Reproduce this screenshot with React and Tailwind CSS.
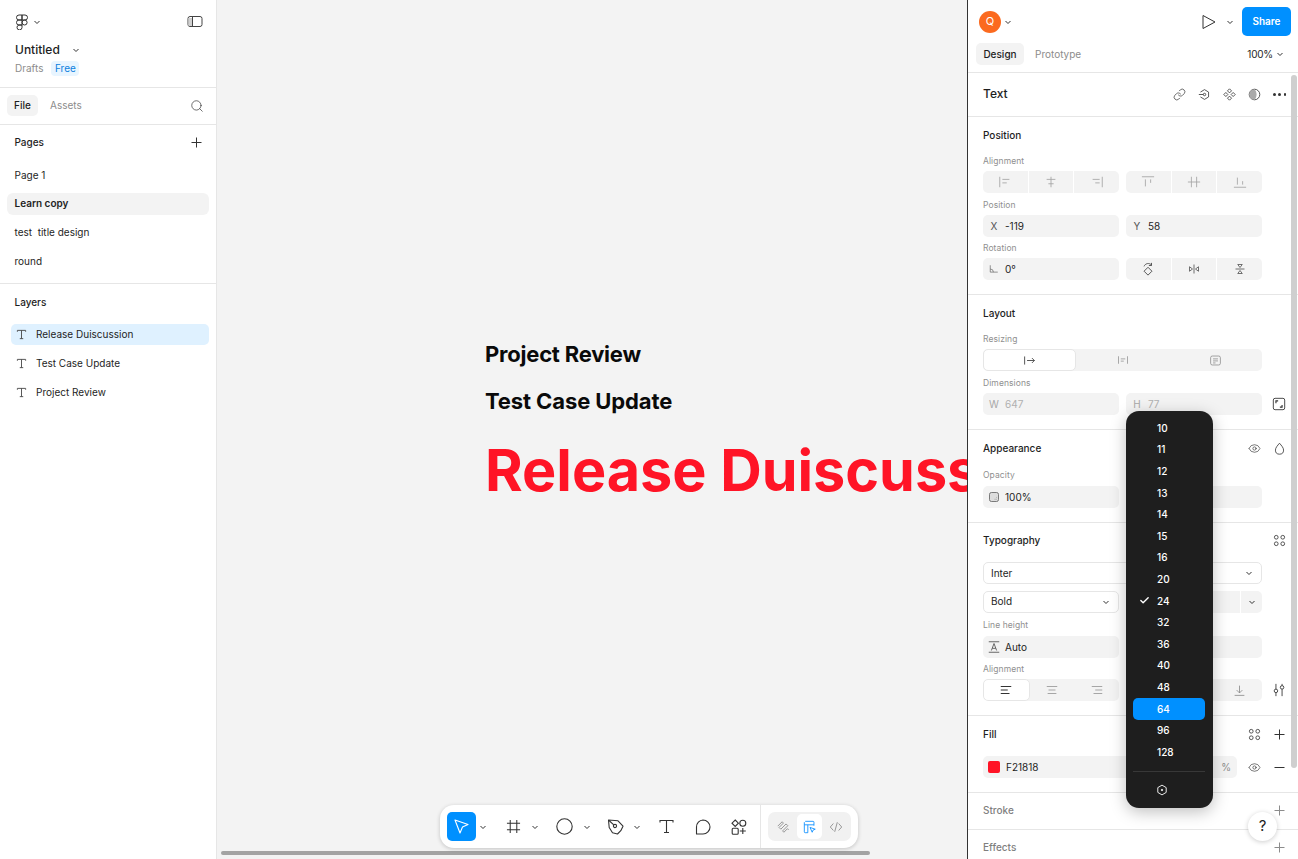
import React from 'react';
import { Check, Eye, Link, Search } from 'lucide-react';

const FONT = 'font-["Inter","Noto_Sans",sans-serif]';

const Svg = ({ size = 16, className = '', children }) => (
  <svg width={size} height={size} viewBox="0 0 16 16" fill="none" stroke="currentColor" strokeWidth="1" className={`shrink-0 ${className}`}>
    {children}
  </svg>
);

const Chevron = ({ className = 'text-[#333]' }) => (
  <svg width="8" height="8" viewBox="0 0 8 8" fill="none" stroke="currentColor" strokeWidth="1" className={`shrink-0 ${className}`}>
    <path d="M1.5 3 4 5.5 6.5 3" />
  </svg>
);

const PlusIcon = ({ className = 'text-[#333]' }) => (
  <svg width="13" height="13" viewBox="0 0 13 13" fill="none" stroke="currentColor" strokeWidth="1" className={`shrink-0 ${className}`}>
    <path d="M6.5 1.500v10M1.500 6.500h10" />
  </svg>
);

const MinusIcon = () => (
  <svg width="13" height="13" viewBox="0 0 13 13" fill="none" stroke="#333" strokeWidth="1" className="shrink-0">
    <path d="M1.500 6.500h10" />
  </svg>
);

const TIcon = () => (
  <Svg size={11} className="text-[#444]">
    <path d="M2 4V2h12v2M8 2v12M5.5 14h5" strokeWidth="1.3" />
  </Svg>
);

const FourDots = () => (
  <Svg size={13} className="text-[#333]">
    <circle cx="4" cy="4" r="2.3" /><circle cx="12" cy="4" r="2.3" /><circle cx="4" cy="12" r="2.3" /><circle cx="12" cy="12" r="2.3" />
  </Svg>
);

const Label = ({ h, children }) => (
  <div className={`flex items-center pl-[15px] text-[8.5px] tracking-[0.01em] text-[#8f8f8f] ${h}`}>{children}</div>
);

const Title = ({ h, children, right, muted }) => (
  <div className={`flex items-center justify-between pl-[15px] pr-[12px] text-[10px] font-medium ${muted ? 'text-[#7f7f7f]' : 'text-[#1e1e1e]'} ${h}`}>
    <span>{children}</span>
    {right && <div className="flex items-center gap-[12px]">{right}</div>}
  </div>
);

const Row = ({ children, trailing }) => (
  <div className="relative flex gap-[7px] pl-[15px]">
    {children}
    {trailing && <div className="absolute left-[304px] top-[4px]">{trailing}</div>}
  </div>
);

const Field = ({ prefix, value, muted }) => (
  <div className="flex h-[22px] w-[136px] items-center rounded-[5px] bg-[#f3f3f3] text-[10px]">
    <span className={`flex w-[22px] items-center justify-center ${muted ? 'text-[#a8a8a8]' : 'text-[#555]'}`}>{prefix}</span>
    <span className={muted ? 'text-[#b0b0b0]' : 'text-[#1e1e1e]'}>{value}</span>
  </div>
);

const Seg = ({ items, selected }) => (
  <div className="flex h-[22px] w-[136px] overflow-hidden rounded-[5px] bg-[#f3f3f3]">
    {items.map((item, i) => (
      <div
        key={i}
        className={`flex flex-1 items-center justify-center ${i > 0 && selected === undefined ? 'border-l border-white' : ''} ${selected === i ? 'rounded-[5px] border border-[#e6e6e6] bg-white text-[#333]' : 'text-[#a6a6a6]'}`}
      >
        {item}
      </div>
    ))}
  </div>
);

const Select = ({ label, className }) => (
  <div className={`flex h-[22px] items-center justify-between rounded-[5px] border border-[#e6e6e6] bg-white pl-[7px] pr-[8px] text-[10px] text-[#1e1e1e] ${className}`}>
    <span>{label}</span>
    <Chevron />
  </div>
);

const alignLeft = <Svg size={14}><path d="M2 2v12M5 5h8M5 9h5" /></Svg>;
const alignCenter = <Svg size={14}><path d="M8 2v12M3 5h10M5 10h6" /></Svg>;
const alignRight = <Svg size={14}><path d="M14 2v12M3 5h8M6 9h5" /></Svg>;
const alignTop = <Svg size={14}><path d="M1 2h14M5 5v8M11 5v4" /></Svg>;
const alignMiddle = <Svg size={14}><path d="M5 2v12M11 2v12M1 8h14" /></Svg>;
const alignBottom = <Svg size={14}><path d="M1 14h14M5 3v8M11 7v4" /></Svg>;

const textLeft = <Svg size={14}><path d="M2 4h12M2 8h8M2 12h10" strokeWidth="1.2" /></Svg>;
const textCenter = <Svg size={14}><path d="M2 4h12M4 8h8M3 12h10" strokeWidth="1.2" /></Svg>;
const textRight = <Svg size={14}><path d="M2 4h12M6 8h8M4 12h10" strokeWidth="1.2" /></Svg>;

const sizes = ['10', '11', '12', '13', '14', '15', '16', '20', '24', '32', '36', '40', '48', '64', '96', '128'];

const SizeMenu = () => (
  <div className="absolute left-[158px] top-[411px] z-20 h-[397px] w-[87px] rounded-[13px] bg-[#1e1e1e] pl-[7px] pr-[8px] pt-[6.500px] text-[10px] font-medium text-white shadow-[0_4px_16px_rgba(0,0,0,0.25)]">
    {sizes.map((s) => (
      <div key={s} className={`relative flex h-[21.6px] items-center rounded-[5px] pl-[24px] ${s === '64' ? 'bg-[#0090ff]' : ''}`}>
        {s === '24' && <Check size={11} strokeWidth={3} className="absolute left-[6px] top-[5px]" />}
        {s}
      </div>
    ))}
    <div className="mt-[8px] border-t border-[#383838]" />
    <div className="flex h-[36px] items-center pl-[23px]">
      <Svg size={12}>
        <path d="M8 1.5 13.6 4.8v6.4L8 14.5l-5.6-3.3V4.8z" strokeWidth="1.2" />
        <circle cx="8" cy="8" r="1" fill="currentColor" />
      </Svg>
    </div>
  </div>
);

const LeftPanel = () => (
  <aside className="flex h-full w-[217px] shrink-0 flex-col border-r border-[#e6e6e6] bg-white text-[10px] text-[#1e1e1e]">
    <div className="h-[88px] shrink-0 border-b border-[#e6e6e6]">
      <div className="flex h-[42px] items-center justify-between pl-[15px] pr-[13px] pt-[1px]">
        <div className="flex items-center gap-[4px]">
          <svg width="14" height="16" viewBox="0 0 14 16" fill="none" stroke="#333" strokeWidth="1">
            <path d="M7 1H4a2.5 2.5 0 0 0 0 5h3zM7 1h3a2.5 2.5 0 0 1 0 5H7zM7 6H4a2.5 2.5 0 0 0 0 5h3zM7 11H4a2.5 2.5 0 1 0 3 2.5z" />
            <circle cx="9.6" cy="8.5" r="2.5" />
          </svg>
          <Chevron />
        </div>
        <svg width="16" height="13" viewBox="0 0 16 13" fill="none" stroke="#444" strokeWidth="1">
          <rect x="1" y="1.5" width="14" height="10" rx="2" />
          <path d="M5.5 1.5v10" />
          <path d="M1.5 3h3.5v8h-3.5z" fill="#d0d0d0" stroke="none" />
        </svg>
      </div>
      <div className="flex h-[16px] items-center gap-[12px] pl-[15px] text-[12px] font-medium">
        Untitled
        <Chevron />
      </div>
      <div className="mt-[3px] flex h-[15px] items-center gap-[8px] pl-[15px] text-[#8c8c8c]">
        Drafts
        <span className="flex h-[15px] w-[28px] items-center justify-center rounded-[4px] bg-[#e8f5ff] text-[#0b7fe0]">Free</span>
      </div>
    </div>

    <div className="flex h-[37px] shrink-0 items-center justify-between border-b border-[#e6e6e6] pl-[7px] pr-[12px] pb-[1px]">
      <div className="flex items-center gap-[12px]">
        <span className="flex h-[21px] w-[31px] items-center justify-center rounded-[5px] bg-[#f3f3f3] font-medium">File</span>
        <span className="text-[#8c8c8c]">Assets</span>
      </div>
      <Search size={14} strokeWidth={1.2} className="text-[#333]" />
    </div>

    <div className="h-[159px] shrink-0 border-b border-[#e6e6e6]">
      <div className="flex h-[35px] items-center justify-between pl-[14.5px] pr-[13px] font-medium">
        Pages
        <PlusIcon />
      </div>
      <div className="flex flex-col gap-[7px] pt-[4px]">
        <div className="mx-[7px] flex h-[22px] items-center px-[7.5px]">Page 1</div>
        <div className="mx-[7px] flex h-[22px] items-center rounded-[6px] bg-[#f3f3f3] px-[7.5px] pb-[1px] font-semibold">Learn copy</div>
        <div className="mx-[7px] -mt-[1px] flex h-[22px] items-center whitespace-pre px-[7.5px]">test  title design</div>
        <div className="mx-[7px] flex h-[22px] items-center px-[7.5px]">round</div>
      </div>
    </div>

    <div className="flex h-[37px] shrink-0 items-center pl-[14.5px] font-medium">Layers</div>
    <div className="flex flex-col gap-[7px] pt-[3px]">
      <div className="ml-[11px] mr-[7px] flex h-[21px] items-center gap-[9px] rounded-[5px] bg-[#dff1ff] pl-[5px]"><TIcon />Release Duiscussion</div>
      <div className="ml-[11px] mr-[7px] flex h-[22px] items-center gap-[9px] pl-[5px]"><TIcon />Test Case Update</div>
      <div className="ml-[11px] mr-[7px] flex h-[22px] items-center gap-[9px] pl-[5px]"><TIcon />Project Review</div>
    </div>
  </aside>
);

const Toolbar = () => (
  <div className="absolute bottom-[11px] left-[223px] z-10 flex h-[43px] w-[418px] items-center rounded-[14px] bg-white pl-[7px] text-[#333] shadow-[0_1px_4px_rgba(0,0,0,0.2)]">
    <div className="flex h-[29px] w-[29px] items-center justify-center rounded-[5px] bg-[#0090ff] text-white">
      <svg width="17" height="17" viewBox="0 0 17 17" fill="none" stroke="currentColor" strokeWidth="1.1"><path d="M2 2l13 4.5-5.500 2.500-2.500 6z" strokeLinejoin="round" /></svg>
    </div>
    <div className="ml-[3px] w-[8px]"><Chevron /></div>
    <div className="ml-[19px] flex w-[32px] items-center gap-[10px]">
      <Svg size={15}><path d="M4.5 1v14M11.5 1v14M1 4.5h14M1 11.5h14" strokeWidth="1.1" /></Svg>
      <Chevron />
    </div>
    <div className="ml-[18px] flex w-[32px] items-center gap-[10px]">
      <svg width="17" height="17" viewBox="0 0 17 17" fill="none" stroke="currentColor" strokeWidth="1.1" className="shrink-0"><circle cx="8.5" cy="8.5" r="7.7" /></svg>
      <Chevron />
    </div>
    <div className="ml-[19px] flex items-center gap-[8px]">
      <svg width="18" height="18" viewBox="0 0 18 18" fill="none" stroke="currentColor" strokeWidth="1.1" className="shrink-0">
        <path d="M1.500 2 11 2.800l5 5.400-2.200 4.500-3.300 3.300-5-1.300L2.200 9.500z" strokeLinejoin="round" />
        <circle cx="8" cy="8" r="1.600" />
        <path d="M2 2.500 6.800 6.800" />
      </svg>
      <Chevron />
    </div>
    <div className="ml-[18px]">
      <svg width="15" height="15" viewBox="0 0 15 15" fill="none" stroke="currentColor" strokeWidth="1.1"><path d="M1 3.500V1.500h13v2M7.500 1.500v12M5 13.500h5" /></svg>
    </div>
    <div className="ml-[21px]">
      <svg width="16" height="16" viewBox="0 0 16 16" fill="none" stroke="currentColor" strokeWidth="1.1"><path d="M8 1a7 7 0 0 1 0 14H1.500V8A7 7 0 0 1 8 1z" strokeLinejoin="round" /></svg>
    </div>
    <div className="ml-[20px]">
      <svg width="16" height="16" viewBox="0 0 16 16" fill="none" stroke="currentColor" strokeWidth="1.1">
        <path d="M4.200 1 7.400 4.200 4.200 7.400 1 4.200z" /><circle cx="11.800" cy="4.200" r="3" /><rect x="1.200" y="9.200" width="6" height="6" rx="1" /><path d="M11.800 9v6M8.800 12h6" />
      </svg>
    </div>
    <div className="ml-[13px] flex h-full items-center border-l border-[#e6e6e6] pl-[7px]">
      <div className="flex h-[29px] w-[83px] items-center justify-between rounded-[7px] bg-[#f1f1f1] px-[2px]">
        <div className="flex w-[26px] justify-center text-[#8a8a8a]">
          <Svg size={14}><path d="M2 7 7 2l1.500 1.500-5 5 2 2 6-6 2 2-6 6 1.500 1.500 4-4 1.500 1" /></Svg>
        </div>
        <div className="flex h-[25px] w-[25px] items-center justify-center rounded-[5px] bg-white text-[#0d8fff]">
          <Svg size={14}><path d="M1.500 5.500h11M5.500 5.500v9M2.500 1.500h9a1 1 0 0 1 1 1v4M1.500 2.500v11a1 1 0 0 0 1 1h3" /><path d="M8 8.500l6 2-2.500 1-1 2.500z" /></Svg>
        </div>
        <div className="flex w-[26px] justify-center text-[#8a8a8a]">
          <Svg size={14}><path d="M5 4 1.500 8 5 12M11 4l3.500 4-3.500 4M9.500 2.500l-3 11" /></Svg>
        </div>
      </div>
    </div>
  </div>
);

const Canvas = () => (
  <main className="relative h-full min-w-0 flex-1 overflow-hidden bg-[#f3f3f3]">
    <div className="flex w-[900px] flex-col pl-[268px] pt-[340px] font-bold text-[#0a0a0a]">
      <div className="h-[29px] text-[22px] leading-[29px] tracking-[-0.01em]">Project Review</div>
      <div className="mt-[18px] h-[29px] text-[22px] leading-[29px] tracking-[-0.005em]">Test Case Update</div>
      <div className="mt-[16px] h-[77px] whitespace-nowrap text-[57.5px] leading-[77px] text-[#ff1426]">Release Duiscussion</div>
    </div>
    <Toolbar />
    <div className="absolute bottom-[4px] left-[4px] h-[4px] w-[649px] rounded-full bg-[#a3a3a3]" />
  </main>
);

const RightPanel = () => (
  <aside className="relative z-10 h-full w-[331px] shrink-0 overflow-hidden border-l border-[#333] bg-white text-[10px] text-[#1e1e1e]">
    <div className="h-[73px] border-b border-[#e6e6e6]">
      <div className="flex h-[43px] items-center justify-between pl-[11px] pr-[7px]">
        <div className="flex items-center gap-[3px]">
          <span className="flex h-[22px] w-[22px] items-center justify-center rounded-full bg-[#fb6a1f] text-[11px] text-white">Q</span>
          <Chevron />
        </div>
        <div className="flex items-center">
          <svg width="14" height="16" viewBox="0 0 14 16" fill="none" stroke="#333" strokeWidth="1" className="mr-[10px]"><path d="M1 1.500 13 8 1 14.500z" strokeLinejoin="round" /></svg>
          <Chevron />
          <span className="ml-[8px] flex h-[29px] w-[49px] items-center justify-center rounded-[5px] bg-[#0090ff] font-semibold text-white">Share</span>
        </div>
      </div>
      <div className="flex h-[22px] items-center justify-between pl-[8px] pr-[14px]">
        <div className="flex items-center gap-[11px]">
          <span className="flex h-[22px] w-[48px] items-center justify-center rounded-[5px] bg-[#f3f3f3] font-medium">Design</span>
          <span className="text-[#8c8c8c]">Prototype</span>
        </div>
        <div className="flex items-center gap-[3px]"><span className="tracking-[-0.02em]">100%</span><Chevron /></div>
      </div>
    </div>

    <div className="flex h-[44px] items-center justify-between border-b border-[#e6e6e6] pl-[15px] pr-[12px]">
      <span className="pb-[1px] text-[12px] font-medium">Text</span>
      <div className="flex items-center gap-[12px] text-[#333]">
        <Link size={13} strokeWidth={1.3} />
        <Svg size={13}><path d="M3 5 8 2l5 3v6l-5 3-5-3" /><path d="M1 8h5.500" /><circle cx="8" cy="8" r="1.500" /></Svg>
        <Svg size={13}><path d="M8 1 10.500 3.500 8 6 5.500 3.500zM8 10l2.500 2.500L8 15l-2.500-2.500zM3.500 5.500 6 8l-2.500 2.500L1 8zM12.500 5.500 15 8l-2.500 2.500L10 8z" /></Svg>
        <Svg size={13}><circle cx="8" cy="8" r="6.500" /><path d="M8 1.500a6.500 6.500 0 0 0 0 13c1.500-1.500 2.500-4 2.500-6.500S9.500 3 8 1.500z" fill="#aaa" stroke="none" /></Svg>
        <div className="flex w-[13px] justify-between">
          <span className="h-[2.5px] w-[2.5px] rounded-full bg-[#333]" />
          <span className="h-[2.5px] w-[2.5px] rounded-full bg-[#333]" />
          <span className="h-[2.5px] w-[2.5px] rounded-full bg-[#333]" />
        </div>
      </div>
    </div>

    <section className="h-[178px] border-b border-[#e6e6e6]">
      <Title h="h-[36px]">Position</Title>
      <Label h="h-[18px] pb-[2px]">Alignment</Label>
      <Row>
        <Seg items={[alignLeft, alignCenter, alignRight]} />
        <Seg items={[alignTop, alignMiddle, alignBottom]} />
      </Row>
      <Label h="h-[22px] pt-[2px]">Position</Label>
      <Row>
        <Field prefix="X" value="-119" />
        <Field prefix="Y" value="58" />
      </Row>
      <Label h="h-[21px] pt-[2px]">Rotation</Label>
      <Row>
        <Field prefix={<Svg size={10}><path d="M2 2v11h12M2 8a5 5 0 0 1 5 5" /></Svg>} value="0°" />
        <div className="flex h-[22px] w-[136px] overflow-hidden rounded-[5px] bg-[#f3f3f3] text-[#444]">
          <div className="flex flex-1 items-center justify-center"><Svg size={14}><path d="M8 6 12.500 10.500 8 15 3.500 10.500zM3.500 5A5 5 0 0 1 12 3.500M12 1v3H9" /></Svg></div>
          <div className="flex flex-1 items-center justify-center border-l border-white"><Svg size={12}><path d="M8 2v12M2 5l4 3-4 3zM14 5l-4 3 4 3z" /></Svg></div>
          <div className="flex flex-1 items-center justify-center border-l border-white"><Svg size={12}><path d="M2 8h12M5 2l3 4 3-4zM5 14l3-4 3 4z" /></Svg></div>
        </div>
      </Row>
    </section>

    <section className="h-[135px] border-b border-[#e6e6e6]">
      <Title h="h-[36px]">Layout</Title>
      <Label h="h-[18px] pb-[2px]">Resizing</Label>
      <div className="ml-[15px] flex h-[22px] w-[279px] rounded-[5px] bg-[#f3f3f3]">
        <div className="flex w-[93px] items-center justify-center rounded-[5px] border border-[#e6e6e6] bg-white text-[#333]">
          <Svg size={13}><path d="M2 3v10M5 8h9M11 5l3 3-3 3" /></Svg>
        </div>
        <div className="flex w-[93px] items-center justify-center text-[#8f8f8f]">
          <Svg size={12}><path d="M2 3v10M14 3v10M5 6.500h6M5 9.500h4" /></Svg>
        </div>
        <div className="flex w-[93px] items-center justify-center text-[#8f8f8f]">
          <Svg size={13}><rect x="2" y="2.500" width="12" height="11" rx="2" /><path d="M5 6h6M5 8.500h6M5 11h3" /></Svg>
        </div>
      </div>
      <Label h="h-[22px] pt-[2px]">Dimensions</Label>
      <Row trailing={<Svg size={14} className="text-[#333]"><rect x="1.500" y="1.500" width="13" height="13" rx="2" /><path d="M4.500 7V4.500H7M11.500 9v2.500H9" strokeWidth="1.300" /></Svg>}>
        <Field prefix="W" value="647" muted />
        <Field prefix="H" value="77" muted />
      </Row>
    </section>

    <section className="h-[93px] border-b border-[#e6e6e6]">
      <Title
        h="h-[36px]"
        right={
          <>
            <Eye size={13} strokeWidth={1.2} className="text-[#333]" />
            <Svg size={13} className="text-[#333]"><path d="M8 1.500c2.500 3 5 5.500 5 8.500a5 5 0 0 1-10 0c0-3 2.500-5.500 5-8.500z" /></Svg>
          </>
        }
      >
        Appearance
      </Title>
      <Label h="h-[20px] pb-[2px]">Opacity</Label>
      <Row>
        <Field prefix={<Svg size={12}><rect x="2" y="2" width="12" height="12" rx="2.500" fill="#ddd" /><path d="M9 11h.8M11.500 11h.5M11.500 8.500h.5" /></Svg>} value="100%" />
        <Field prefix="" value="" />
      </Row>
    </section>

    <section className="h-[193px] border-b border-[#e6e6e6]">
      <Title h="h-[35px]" right={<FourDots />}>Typography</Title>
      <div className="pt-[4px]">
        <div className="pl-[15px]"><Select label="Inter" className="w-[279px]" /></div>
      </div>
      <div className="mt-[7px]">
        <Row>
          <Select label="Bold" className="w-[136px] pb-[1px]" />
          <div className="flex h-[22px] w-[136px] justify-end rounded-[5px] bg-[#f3f3f3]">
            <div className="flex w-[22px] items-center justify-center border-l border-white"><Chevron /></div>
          </div>
        </Row>
      </div>
      <Label h="h-[23px] pt-[2px]">Line height</Label>
      <Row>
        <Field prefix={<Svg size={14}><path d="M2 2h12M2 14h12M5 12l3-8 3 8M6 9.500h4" /></Svg>} value="Auto" />
        <Field prefix="" value="" />
      </Row>
      <Label h="h-[21px] pt-[1px]">Alignment</Label>
      <Row trailing={<Svg size={14} className="text-[#333]"><path d="M4.500 1v6M4.500 11v4M11.500 1v2M11.500 7v8" /><circle cx="4.500" cy="9" r="2" /><circle cx="11.500" cy="5" r="2" /></Svg>}>
        <Seg items={[textLeft, textCenter, textRight]} selected={0} />
        <div className="flex h-[22px] w-[136px] items-center justify-end rounded-[5px] bg-[#f3f3f3] pr-[16px] text-[#888]">
          <Svg size={13}><path d="M8 2v9M4.500 7.500 8 11l3.500-3.500M2 14h12" /></Svg>
        </div>
      </Row>
    </section>

    <section className="h-[77px] border-b border-[#e6e6e6]">
      <div className="flex h-[36px] items-center justify-between pl-[15px] pr-[12px] font-medium">
        <span>Fill</span>
        <div className="flex items-center gap-[12px]"><FourDots /><PlusIcon /></div>
      </div>
      <div className="mt-[4px] flex items-center pl-[15px] pr-[12px]">
        <div className="flex h-[22px] w-[254px] items-center rounded-[5px] bg-[#f3f3f3] pl-[5px] pr-[6px]">
          <span className="h-[12px] w-[12px] rounded-[2px] bg-[#ff1426]" />
          <span className="ml-[6px] flex-1">F21818</span>
          <span className="text-[#8c8c8c]">%</span>
        </div>
        <Eye size={13} strokeWidth={1.2} className="ml-[11px] text-[#333]" />
        <span className="ml-[12px]"><MinusIcon /></span>
      </div>
    </section>

    <section className="h-[37px] border-b border-[#e6e6e6]">
      <Title h="h-[34px]" muted right={<PlusIcon className="text-[#8c8c8c]" />}>Stroke</Title>
    </section>
    <section>
      <Title h="h-[34px]" muted right={<PlusIcon className="text-[#8c8c8c]" />}>Effects</Title>
    </section>

    <div className="absolute left-[323px] top-[75px] h-[693px] w-[6px] rounded-full bg-[#cfcfcf]" />
    <SizeMenu />
    <div className="absolute left-[280px] top-[812px] z-10 flex h-[29px] w-[29px] items-center justify-center rounded-full bg-white text-[15px] text-[#1e1e1e] shadow-[0_1px_5px_rgba(0,0,0,0.2)]">?</div>
  </aside>
);

export default function App() {
  return (
    <div className={`flex h-[859px] w-[1298px] overflow-hidden bg-white ${FONT}`}>
      <LeftPanel />
      <Canvas />
      <RightPanel />
    </div>
  );
}
